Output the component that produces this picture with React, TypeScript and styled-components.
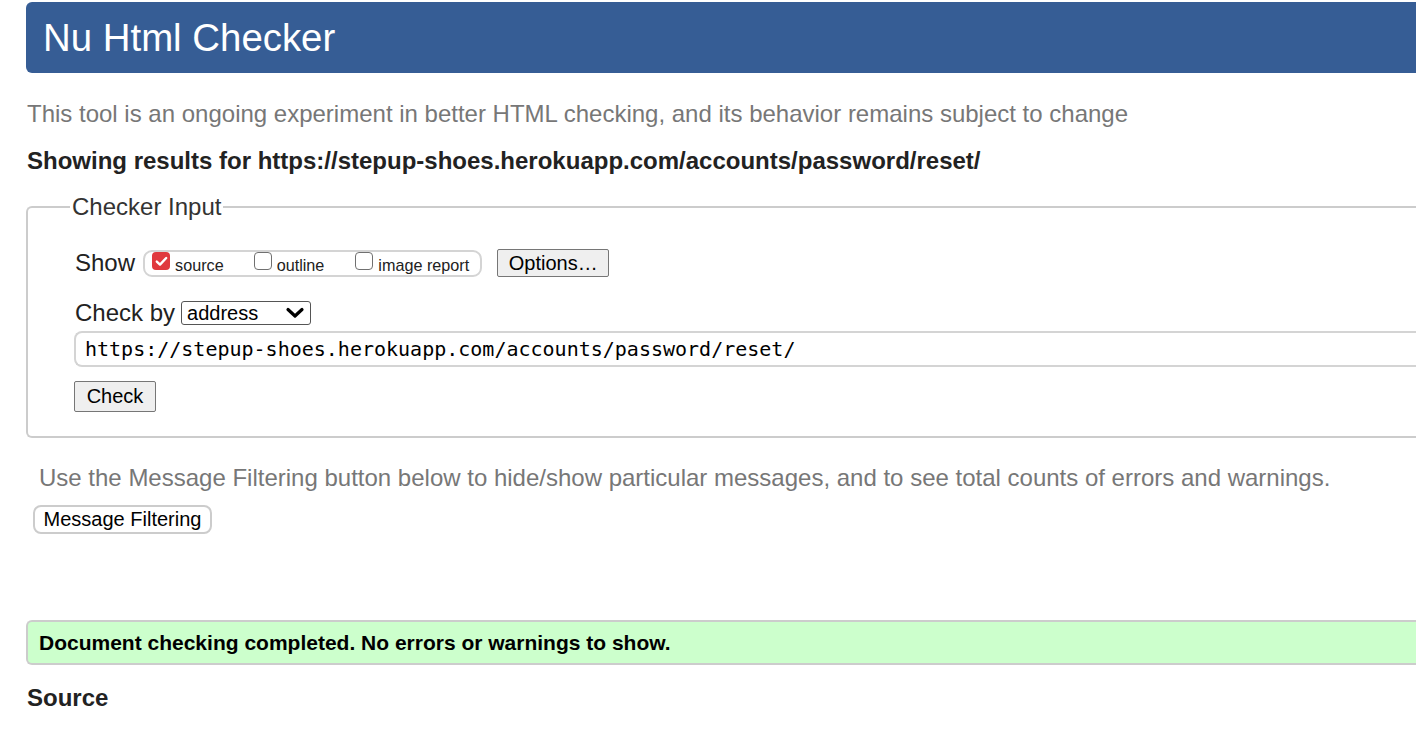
import React from 'react';
import styled, { createGlobalStyle } from 'styled-components';

const GlobalStyle = createGlobalStyle`
	html, body {
		margin: 0;
		padding: 0;
		background: #fff;
		overflow: hidden;
	}
	body {
		font-family: 'Liberation Sans', Arial, sans-serif;
		color: #222;
	}
`;

const Page = styled.div`
	width: 1460px;
	padding: 2px 0 0 26px;
	display: flex;
	flex-direction: column;
`;

const Header = styled.header`
	height: 71px;
	background: #365d95;
	border-radius: 6px 0 0 6px;
	display: flex;
	align-items: center;
	padding-left: 17px;
	h1 {
		margin: 0;
		color: #fff;
		font-size: 38.4px;
		font-weight: normal;
	}
`;

const Intro = styled.p<{ $indent?: number }>`
	margin: ${(p) => (p.$indent ? '26px 0 13px' : '27px 0 0')};
	padding-left: ${(p) => p.$indent || 1}px;
	font-size: 24px;
	line-height: 28px;
	color: #777;
`;

const Results = styled.p`
	margin: 19px 0 0 1px;
	font-size: 24px;
	line-height: 28px;
	font-weight: bold;
	color: #222;
`;

const Fieldset = styled.fieldset`
	margin: 18px 0 0;
	padding: 28px 0 25px 47px;
	border: 2px solid #ccc;
	border-right: none;
	border-radius: 6px 0 0 6px;
	display: flex;
	flex-direction: column;
	legend {
		margin-left: -5px;
		padding: 0 2px;
		font-size: 24px;
		line-height: 28px;
		color: #333;
	}
`;

const Row = styled.div<{ $mt?: number }>`
	display: flex;
	align-items: center;
	height: 28px;
	margin-top: ${(p) => p.$mt || 0}px;
	font-size: 24px;
	color: #222;
`;

const Label = styled.span<{ $gap: number }>`
	margin-right: ${(p) => p.$gap}px;
	line-height: 28px;
`;

const ToggleGroup = styled.div`
	display: flex;
	align-items: center;
	height: 27px;
	box-sizing: border-box;
	padding: 0 11px 0 7px;
	border: 2px solid #d4d4d4;
	border-radius: 9px;
	margin-right: 15px;
`;

const Toggle = styled.label<{ $gap?: number }>`
	display: flex;
	align-items: center;
	margin-top: 4px;
	font-size: 16.2px;
	line-height: 18px;
	color: #222;
	margin-right: ${(p) => p.$gap || 0}px;
`;

const Box = styled.span<{ $checked?: boolean }>`
	width: 18px;
	height: 18px;
	box-sizing: border-box;
	border-radius: 4px;
	margin: -8px 5px 0 0;
	display: inline-flex;
	align-items: center;
	justify-content: center;
	background: ${(p) => (p.$checked ? '#e0393e' : '#fff')};
	border: ${(p) => (p.$checked ? 'none' : '1px solid #707070')};
`;

const Button = styled.button<{ $soft?: boolean; $w: number; $h: number }>`
	font-family: 'Liberation Sans', Arial, sans-serif;
	font-size: 20px;
	color: #000;
	width: ${(p) => p.$w}px;
	height: ${(p) => p.$h}px;
	padding: 0;
	background: ${(p) => (p.$soft ? '#fff' : '#efefef')};
	border: ${(p) => (p.$soft ? '2px solid #ccc' : '1px solid #767676')};
	border-radius: ${(p) => (p.$soft ? '8px' : '2px')};
	cursor: pointer;
`;

const Select = styled.div`
	width: 130px;
	height: 24px;
	box-sizing: border-box;
	border: 1px solid #555;
	border-radius: 3px;
	display: flex;
	align-items: center;
	justify-content: space-between;
	padding: 0 5px 0 5px;
	font-size: 20px;
	color: #000;
`;

const UrlInput = styled.div`
	margin-top: 4px;
	margin-left: -1px;
	height: 36px;
	box-sizing: border-box;
	border: 2px solid #d4d4d4;
	border-right: none;
	border-radius: 8px 0 0 8px;
	display: flex;
	align-items: center;
	padding-left: 9px;
	font-family: 'DejaVu Sans Mono', monospace;
	font-size: 20px;
	color: #000;
`;

const Notice = styled.div`
	margin-top: 87px;
	height: 45px;
	box-sizing: border-box;
	background: #ccffcc;
	border: 2px solid #ccc;
	border-right: none;
	border-radius: 6px 0 0 6px;
	display: flex;
	align-items: center;
	padding-left: 11px;
	font-size: 21px;
	font-weight: bold;
	color: #000;
`;

const Heading = styled.h2`
	margin: 19px 0 0 1px;
	font-size: 24px;
	line-height: 28px;
	font-weight: bold;
	color: #222;
`;

const Check = () => (
	<svg width="13" height="11" viewBox="0 0 13 11">
		<path d="M1.8 5.6 L5 8.6 L11.2 2" fill="none" stroke="#fff" strokeWidth="2.4" strokeLinecap="round" strokeLinejoin="round" />
	</svg>
);

const Chevron = () => (
	<svg width="20" height="14" viewBox="0 0 20 14">
		<path d="M3 3.5 L10 10 L17 3.5" fill="none" stroke="#000" strokeWidth="3.2" strokeLinecap="round" strokeLinejoin="round" />
	</svg>
);

const App = () => {
	const url = 'https://stepup-shoes.herokuapp.com/accounts/password/reset/';
	return (
		<>
			<GlobalStyle />
			<Page>
				<Header>
					<h1>Nu Html Checker</h1>
				</Header>
				<Intro>
					This tool is an ongoing experiment in better HTML checking, and its behavior remains subject to change
				</Intro>
				<Results>Showing results for {url}</Results>
				<Fieldset>
					<legend>Checker Input</legend>
					<Row>
						<Label $gap={8}>Show</Label>
						<ToggleGroup>
							<Toggle $gap={30}>
								<Box $checked>
									<Check />
								</Box>
								source
							</Toggle>
							<Toggle $gap={31}>
								<Box />
								outline
							</Toggle>
							<Toggle>
								<Box />
								image report
							</Toggle>
						</ToggleGroup>
						<Button $w={112} $h={28}>
							Options…
						</Button>
					</Row>
					<Row $mt={22}>
						<Label $gap={6}>Check by</Label>
						<Select>
							address
							<Chevron />
						</Select>
					</Row>
					<UrlInput>{url}</UrlInput>
					<Row $mt={14} style={{ height: 30 }}>
						<Button $w={82} $h={31} style={{ marginLeft: -1 }}>
							Check
						</Button>
					</Row>
				</Fieldset>
				<Intro $indent={13}>
					Use the Message Filtering button below to hide/show particular messages, and to see total counts of errors and
					warnings.
				</Intro>
				<Row>
					<Button $soft $w={179} $h={29} style={{ marginLeft: 7 }}>
						Message Filtering
					</Button>
				</Row>
				<Notice>Document checking completed. No errors or warnings to show.</Notice>
				<Heading>Source</Heading>
			</Page>
		</>
	);
};

export default App;
